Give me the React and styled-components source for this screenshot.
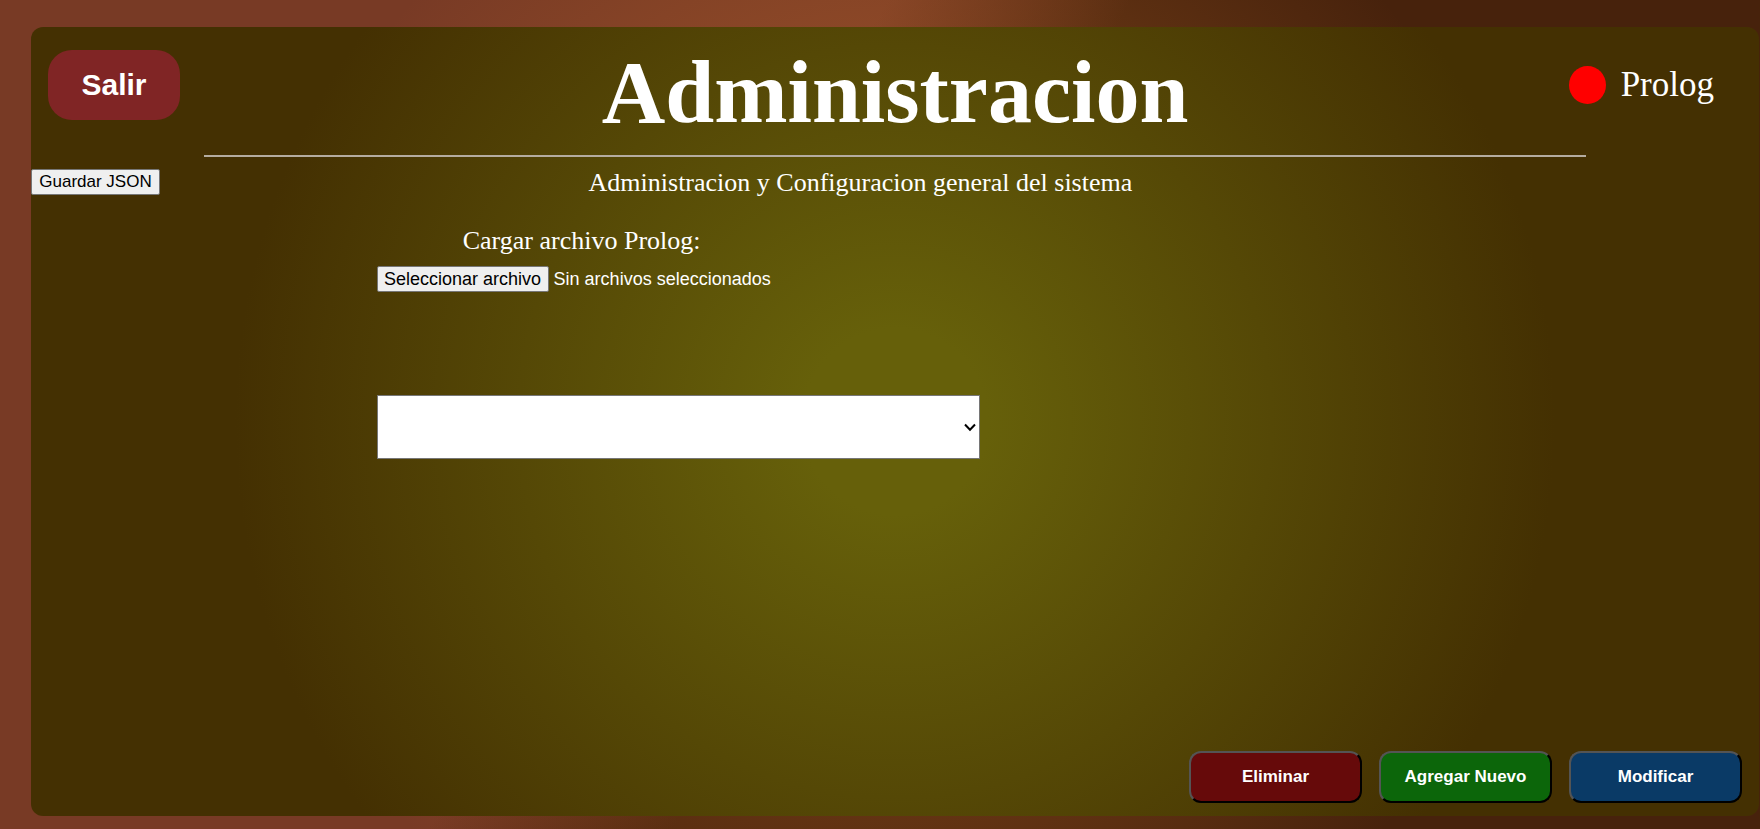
import React from "react";
import styled, { createGlobalStyle } from "styled-components";

const GlobalStyle = createGlobalStyle`
  * { box-sizing: border-box; }
  body {
    margin: 0;
    font-family: "Liberation Serif", "Times New Roman", serif;
    color: #fff;
  }
  button, select, input { font-family: "Liberation Sans", Arial, sans-serif; }
`;

const Page = styled.div`
  display: flex;
  min-height: 100vh;
  padding: 27px 1px 13px 31px;
  background:
    radial-gradient(circle 640px at 51% 50%, rgba(202, 115, 44, 0.57), rgba(202, 115, 44, 0)),
    linear-gradient(119deg, #783a25 40%, #47220c 51%);
`;

const Panel = styled.main`
  flex: 1;
  display: flex;
  flex-direction: column;
  border-radius: 12px;
  background: radial-gradient(circle 660px at 50% 50%, #66600a 0%, #66600a 14%, #443002 100%);
`;

const Header = styled.header`
  display: grid;
  grid-template-columns: 10% 80% minmax(0, 1fr);
  height: 130px;
`;

const ExitButton = styled.button`
  justify-self: start;
  width: 132px;
  height: 70px;
  margin: 23px 0 0 17px;
  border: 0;
  border-radius: 24px;
  background: #802525;
  color: #fff;
  font-size: 30px;
  font-weight: bold;
`;

const Heading = styled.div`
  border-bottom: 2px solid #b5aca0;
`;

const Title = styled.h1`
  margin: 0;
  padding-top: 20px;
  font-size: 88px;
  line-height: 92px;
  text-align: center;
`;

const Status = styled.div`
  display: flex;
  align-items: center;
  justify-content: flex-end;
  gap: 15px;
  height: 38px;
  margin: 39px 45px 0 0;
  font-size: 35px;
`;

const Dot = styled.span`
  flex: none;
  width: 37px;
  height: 38px;
  border-radius: 50%;
  background: #f00;
`;

const Body = styled.div`
  flex: 1;
  display: grid;
  grid-template-columns: 20% 1fr;
  align-items: start;
`;

const PlainButton = styled.button`
  justify-self: start;
  width: 129px;
  height: 26px;
  margin-top: 12px;
  padding: 0;
  border: 1px solid #767676;
  border-radius: 2px;
  background: #efefef;
  color: #000;
  font-size: 17px;
  line-height: 22px;
`;

const Content = styled.section`
  display: flex;
  flex-direction: column;
  align-items: flex-start;
`;

const Subtitle = styled.p`
  align-self: stretch;
  margin: 11px 0 0;
  padding-right: 30%;
  font-size: 26px;
  line-height: 30px;
  text-align: center;
`;

const FileField = styled.div`
  display: flex;
  flex-direction: column;
  align-items: center;
  width: 410px;
  margin-top: 28px;
`;

const FileLabel = styled.label`
  font-size: 26px;
  line-height: 30px;
`;

const FileRow = styled.div`
  position: relative;
  display: flex;
  align-items: center;
  align-self: stretch;
  gap: 5px;
  margin-top: 10px;
  font-family: "Liberation Sans", Arial, sans-serif;
  font-size: 18px;
  line-height: 24px;
`;

const FileButton = styled.span`
  width: 172px;
  height: 26px;
  border: 1px solid #767676;
  border-radius: 2px;
  background: #efefef;
  color: #000;
  text-align: center;
`;

const FileInput = styled.input`
  position: absolute;
  inset: 0;
  width: 100%;
  opacity: 0;
  cursor: pointer;
`;

const PickerBox = styled.div`
  position: relative;
  width: 44%;
  max-width: 603px;
  margin-top: 103px;
`;

const Picker = styled.select`
  display: block;
  appearance: none;
  width: 100%;
  height: 64px;
  padding: 0 24px 0 5px;
  border: 1px solid #767676;
  border-radius: 0;
  background: #fff;
  color: #000;
  font-size: 17px;
`;

const Chevron = styled.svg`
  position: absolute;
  top: 28px;
  right: 4px;
  width: 12px;
  height: 9px;
  fill: none;
  stroke: #000;
  stroke-width: 2;
  pointer-events: none;
`;

const Actions = styled.footer`
  display: flex;
  justify-content: flex-end;
  gap: 17px;
  padding: 0 17px 13px 0;
`;

const ActionButton = styled.button`
  width: 173px;
  height: 52px;
  border: 2px outset #000;
  border-radius: 12px;
  background: ${({ $color }) => $color};
  color: #fff;
  font-size: 17px;
  font-weight: bold;
`;

export default function App() {
  return (
    <>
      <GlobalStyle />
      <Page>
        <Panel>
          <Header>
            <ExitButton type="button">Salir</ExitButton>
            <Heading>
              <Title>Administracion</Title>
            </Heading>
            <Status>
              <Dot />
              Prolog
            </Status>
          </Header>
          <Body>
            <PlainButton type="button">Guardar JSON</PlainButton>
            <Content>
              <Subtitle>Administracion y Configuracion general del sistema</Subtitle>
              <FileField>
                <FileLabel htmlFor="archivo">Cargar archivo Prolog:</FileLabel>
                <FileRow>
                  <FileButton>Seleccionar archivo</FileButton>
                  <span>Sin archivos seleccionados</span>
                  <FileInput id="archivo" type="file" />
                </FileRow>
              </FileField>
              <PickerBox>
                <Picker aria-label="Elemento" />
                <Chevron viewBox="0 0 12 9" aria-hidden="true">
                  <path d="M1 1.5 L6 6.8 L11 1.5" />
                </Chevron>
              </PickerBox>
            </Content>
          </Body>
          <Actions>
            <ActionButton type="button" $color="#660a0a">Eliminar</ActionButton>
            <ActionButton type="button" $color="#0c660a">Agregar Nuevo</ActionButton>
            <ActionButton type="button" $color="#0a3a66">Modificar</ActionButton>
          </Actions>
        </Panel>
      </Page>
    </>
  );
}
